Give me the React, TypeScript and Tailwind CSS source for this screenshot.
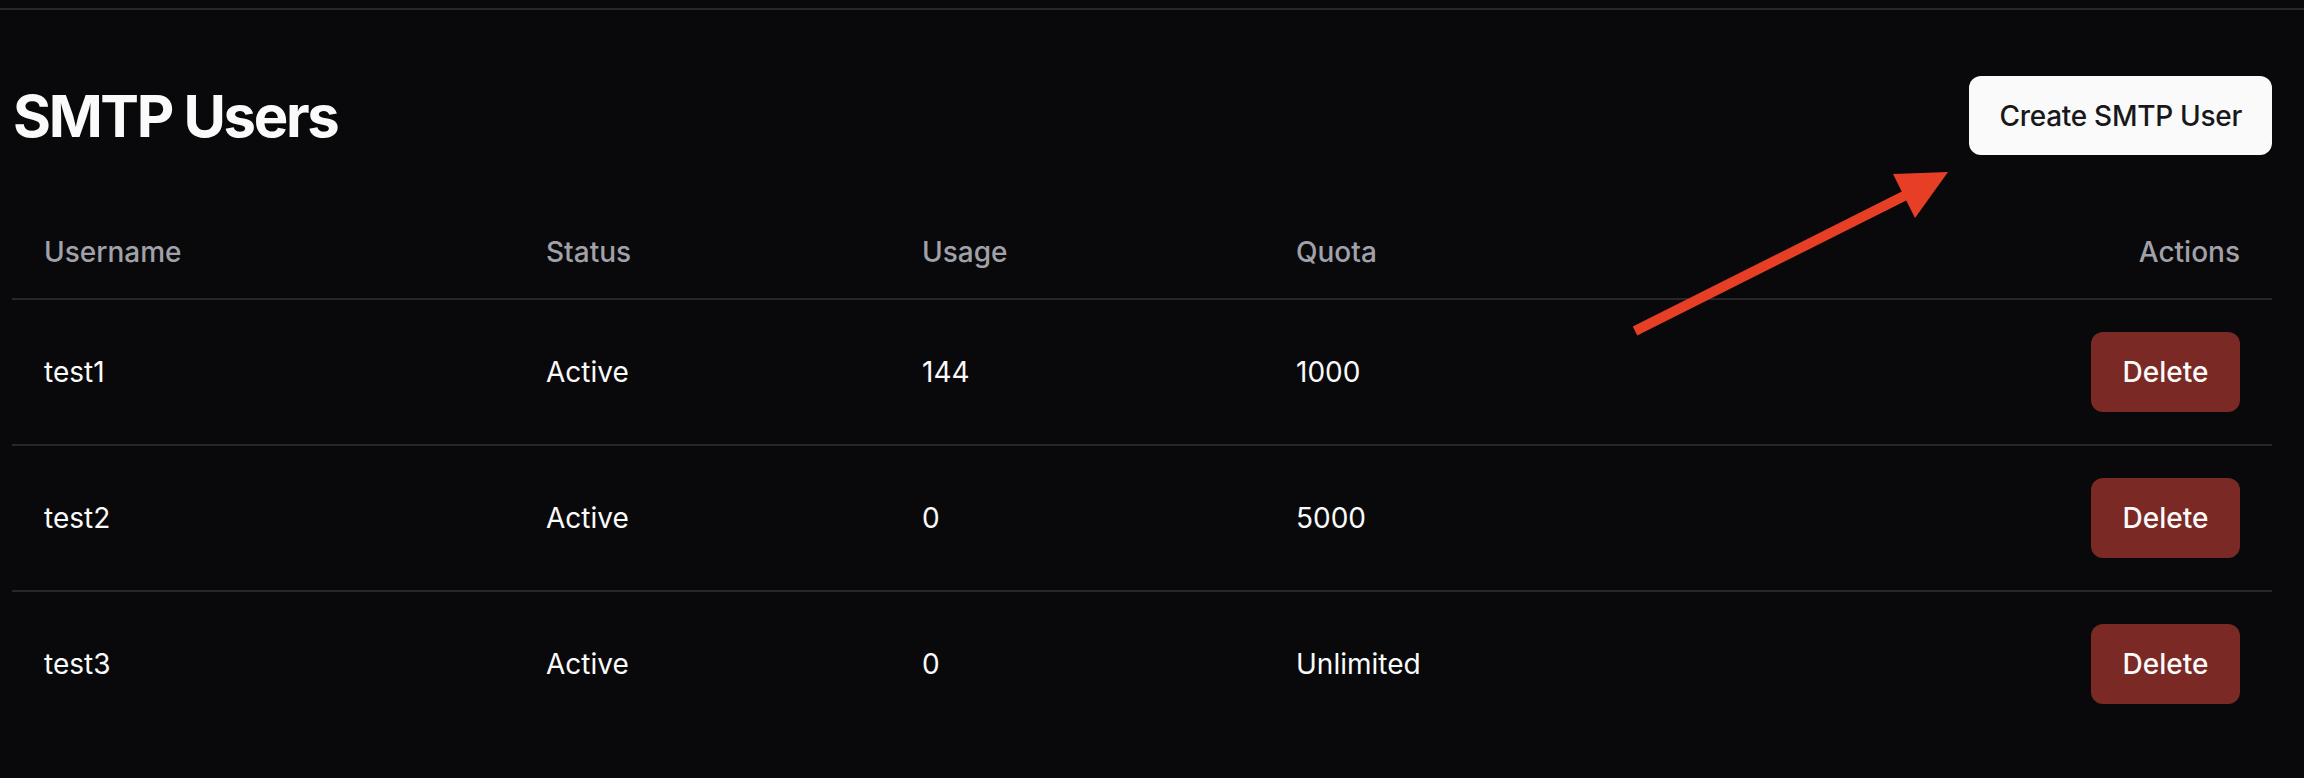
import React from 'react';

interface SmtpUser {
    username: string;
    status: string;
    usage: number;
    quota: string;
}

const users: SmtpUser[] = [
    { username: 'test1', status: 'Active', usage: 144, quota: '1000' },
    { username: 'test2', status: 'Active', usage: 0, quota: '5000' },
    { username: 'test3', status: 'Active', usage: 0, quota: 'Unlimited' },
];

function Arrow() {
    return (
        <svg
            className="absolute left-[1620px] top-[160px] pointer-events-none"
            width="340"
            height="190"
            viewBox="0 0 340 190"
            fill="none"
        >
            <line x1="15" y1="171" x2="286" y2="35" stroke="#e63f26" strokeWidth="10" />
            <polygon points="273,14 328,12 295,58" fill="#e63f26" />
        </svg>
    );
}

export default function App() {
    return (
        <div className="relative min-h-screen bg-[#09090b] text-[#fafafa] font-['Inter',sans-serif]">
            <div className="h-[10px] border-b-2 border-[#27272a]"></div>

            <main className="pl-[12px] pr-[32px] pt-[66px]">
                <div className="flex items-center justify-between mb-[50px]">
                    <h1 className="text-[58px] leading-none font-bold tracking-[-0.04em] pl-[1px]">SMTP Users</h1>
                    <button className="h-[79px] px-[30px] rounded-[12px] bg-[#fafafa] text-[#18181b] text-[28px] font-medium tracking-[-0.01em]">
                        Create SMTP User
                    </button>
                </div>

                <table className="w-full table-fixed text-[28px]">
                    <thead>
                        <tr className="border-b-2 border-[#27272a]">
                            <th className="w-[502px] h-[94px] px-[32px] text-left font-medium text-[#a1a1aa]">Username</th>
                            <th className="w-[376px] h-[94px] px-[32px] text-left font-medium text-[#a1a1aa]">Status</th>
                            <th className="w-[374px] h-[94px] px-[32px] text-left font-medium text-[#a1a1aa]">Usage</th>
                            <th className="h-[94px] px-[32px] text-left font-medium text-[#a1a1aa]">Quota</th>
                            <th className="h-[94px] px-[32px] text-right font-medium text-[#a1a1aa]">Actions</th>
                        </tr>
                    </thead>
                    <tbody>
                        {users.map((u, i) => (
                            <tr
                                key={u.username}
                                className={i < users.length - 1 ? 'border-b-2 border-[#27272a]' : ''}
                            >
                                <td className="p-[32px]">{u.username}</td>
                                <td className="p-[32px]">{u.status}</td>
                                <td className="p-[32px]">{u.usage}</td>
                                <td className="p-[32px]">{u.quota}</td>
                                <td className="p-[32px] text-right">
                                    <button className="h-[80px] w-[149px] rounded-[12px] bg-[#7b2925] text-[#fafafa] font-medium">
                                        Delete
                                    </button>
                                </td>
                            </tr>
                        ))}
                    </tbody>
                </table>
            </main>

            <Arrow />
        </div>
    );
}
